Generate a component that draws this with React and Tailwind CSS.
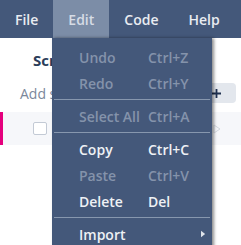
import React from "react";

const items = [
  { label: "Undo", key: "Ctrl+Z", disabled: true },
  { label: "Redo", key: "Ctrl+Y", disabled: true },
  { sep: true },
  { label: "Select All", key: "Ctrl+A", disabled: true },
  { sep: true },
  { label: "Copy", key: "Ctrl+C" },
  { label: "Paste", key: "Ctrl+V", disabled: true },
  { label: "Delete", key: "Del" },
  { sep: true },
  { label: "Import", sub: true },
];

function MenuItem({ item }) {
  if (item.sep) {
    return <div className="mx-[2px] my-[3px] h-px bg-[#8797ae]" />;
  }
  return (
    <div
      className={`flex h-[26px] items-center pl-[27px] pr-[6px] ${
        item.disabled ? "text-[#8493ab]" : "text-[#eef1f5]"
      }`}
    >
      <span className="w-[69px] whitespace-nowrap">{item.label}</span>
      <span className="flex-1 whitespace-nowrap">{item.key}</span>
      {item.sub && (
        <svg viewBox="0 0 6 8" className="h-[8px] w-[5px]">
          <path d="M0 0 L5 4 L0 8 Z" fill="#dfe4ea" />
        </svg>
      )}
    </div>
  );
}

export default function App() {
  return (
    <div className="relative h-[245px] w-[241px] overflow-hidden bg-white font-['Open_Sans',sans-serif] text-[14px] font-semibold">
      {/* Menu bar */}
      <div className="flex h-[38px] bg-[#44587a] text-[#e9ecf1]">
        <div className="flex items-center px-[15px]">File</div>
        <div className="flex items-center bg-[#7c8da7] px-[15px] text-[#d6dce5]">Edit</div>
        <div className="flex items-center px-[15px]">Code</div>
        <div className="flex items-center px-[15px]">Help</div>
      </div>

      {/* Page behind */}
      <div className="flex h-[44px] items-center pl-[33px] text-[15px] font-bold text-[#2c3d5a] whitespace-nowrap">
        Scripts and Functions
      </div>
      <div className="mt-px flex h-[20px] items-center pl-[20px] pr-[5px]">
        <span className="flex-1 font-normal text-[#7b879b]">Add script</span>
        <div className="flex h-[20px] w-[40px] items-center justify-center rounded-[4px] bg-[#e3e7ed]">
          <svg viewBox="0 0 10 10" className="h-[9px] w-[9px]">
            <path d="M5 0 V10 M0 5 H10" stroke="#1f3150" strokeWidth="2" />
          </svg>
        </div>
      </div>
      <div className="mt-[9px] flex h-[33px] items-center border-l-[3px] border-[#e5007d] bg-[#f6f7fa] pl-[30px] pr-[20px]">
        <div className="h-[13px] w-[14px] rounded-[2px] border border-[#c3cad5] bg-white" />
        <div className="flex-1" />
        <svg viewBox="0 0 8 10" className="h-[10px] w-[8px]">
          <path d="M1 1 L7 5 L1 9 Z" fill="none" stroke="#d3d8df" strokeWidth="1" />
        </svg>
      </div>

      {/* Edit dropdown */}
      <div className="absolute left-[52px] top-[38px] h-[220px] w-[160px] bg-[#44587a] pt-[6px] shadow-[2px_0_3px_rgba(0,0,0,0.45)]">
        {items.map((item, i) => (
          <MenuItem key={i} item={item} />
        ))}
      </div>
    </div>
  );
}
